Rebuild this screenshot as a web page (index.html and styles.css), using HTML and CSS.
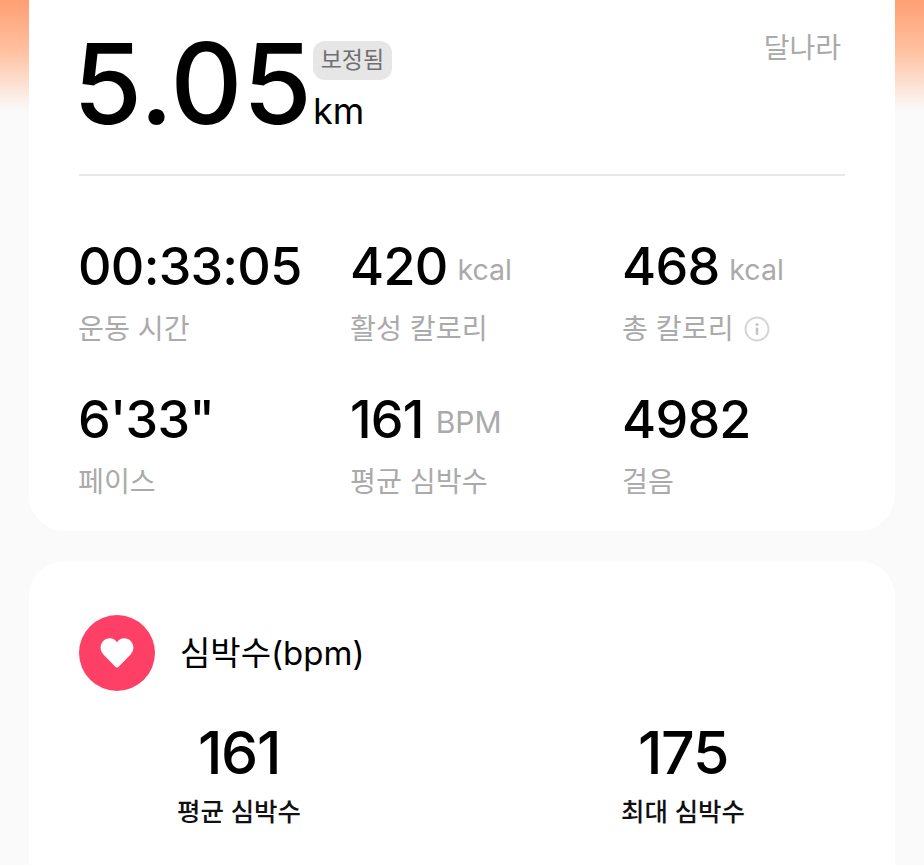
FILE: index.html
```html
<!DOCTYPE html>
<html lang="ko">

<head>
    <meta charset="UTF-8">
    <meta name="viewport" content="width=device-width, initial-scale=1.0">
    <title>운동 기록</title>
    <link rel="stylesheet" href="styles.css">
</head>

<body>
    <div class="page">
        <div class="card summary">
            <div class="top">
                <div class="distance">5.05</div>
                <div class="distanceSide">
                    <span class="tag">보정됨</span>
                    <span class="unit">km</span>
                </div>
                <div class="place">달나라</div>
            </div>
            <div class="line"></div>
            <div class="stats">
                <div class="stat">
                    <div class="value">00:33:05</div>
                    <div class="label">운동 시간</div>
                </div>
                <div class="stat">
                    <div class="value">420<span class="small">kcal</span></div>
                    <div class="label">활성 칼로리</div>
                </div>
                <div class="stat">
                    <div class="value">468<span class="small">kcal</span></div>
                    <div class="label">총 칼로리
                        <svg class="info" viewBox="0 0 26 26" width="26" height="26">
                            <circle cx="13" cy="13" r="11.5" fill="none" stroke="#d6d6d6" stroke-width="2" />
                            <circle cx="13" cy="8.500" r="1.6" fill="#c4c4c4" />
                            <rect x="11.7" y="11.5" width="2.6" height="7.5" rx="1" fill="#c4c4c4" />
                        </svg>
                    </div>
                </div>
                <div class="stat">
                    <div class="value">6'33"</div>
                    <div class="label">페이스</div>
                </div>
                <div class="stat">
                    <div class="value">161<span class="small bpm">BPM</span></div>
                    <div class="label">평균 심박수</div>
                </div>
                <div class="stat">
                    <div class="value">4982</div>
                    <div class="label">걸음</div>
                </div>
            </div>
        </div>

        <div class="card heart">
            <div class="heartHead">
                <div class="heartIcon">
                    <svg viewBox="0 0 34 32" width="34" height="32">
                        <path d="M17 30.5c-.7 0-1.3-.3-1.9-.9L3.4 17.4C1.6 15.500 .6 13.300 .6 10.800 .6 5.300 4.700 1.200 9.700 1.200c3 0 5.600 1.500 7.300 4 1.700-2.500 4.300-4 7.300-4 5 0 9.100 4.100 9.100 9.600 0 2.500-1 4.700-2.800 6.600L18.900 29.600c-.6.600-1.200.9-1.900.9z" fill="#fff" />
                    </svg>
                </div>
                <div class="heartTitle">심박수(bpm)</div>
            </div>
            <div class="heartStats">
                <div class="heartStat">
                    <div class="heartValue">161</div>
                    <div class="heartLabel">평균 심박수</div>
                </div>
                <div class="heartStat">
                    <div class="heartValue">175</div>
                    <div class="heartLabel">최대 심박수</div>
                </div>
            </div>
        </div>
    </div>
</body>

</html>
```

FILE: styles.css
```css
* {
    margin: 0;
    padding: 0;
    box-sizing: border-box;
}

html,
body {
    height: 865px;
    overflow: hidden;
}

body {
    font-family: Inter, "Noto Sans CJK KR", sans-serif;
    background: linear-gradient(#ff9f73 0, #ffc09f 50px, #fafafa 110px);
    color: #000;
}

.page {
    height: 865px;
    padding: 0 29px;
    display: flex;
    flex-direction: column;
    gap: 30px;
}

.card {
    background-color: #fff;
}

.summary {
    height: 531px;
    padding: 0 50px;
    border-radius: 0 0 36px 36px;
}

.top {
    display: flex;
    height: 174px;
}

.distance {
    font-size: 112px;
    line-height: 110px;
    font-weight: 500;
    margin-left: -6px;
    margin-top: 28px;
    height: 110px;
}

.distanceSide {
    display: flex;
    flex-direction: column;
    align-items: flex-start;
    margin-left: 1px;
    margin-top: 41px;
}

.tag {
    width: 79px;
    height: 39px;
    border-radius: 12px;
    background-color: #e6e6e6;
    color: #707070;
    font-size: 23px;
    line-height: 39px;
    text-align: center;
}

.unit {
    font-size: 36px;
    line-height: 40px;
    margin-top: 11px;
}

.place {
    margin-left: auto;
    margin-top: 30px;
    margin-right: 4px;
    color: #aaa;
    font-size: 28px;
    line-height: 36px;
}

.line {
    height: 2px;
    background-color: #e8e8e8;
}

.stats {
    display: grid;
    grid-template-columns: repeat(3, 272px);
    margin-top: 60px;
    row-gap: 29px;
}

.stat {
    height: 124px;
}

.value {
    height: 62px;
    margin-left: -1px;
    font-size: 52px;
    line-height: 62px;
    font-weight: 500;
    letter-spacing: -0.75px;
    white-space: nowrap;
}

.small {
    font-size: 28.5px;
    font-weight: 400;
    color: #aaa;
    letter-spacing: 0;
    margin-left: 10px;
    vertical-align: 5px;
}

.bpm {
    font-size: 30px;
    margin-left: 12px;
}

.label {
    margin-top: 11px;
    margin-left: -1px;
    display: flex;
    align-items: center;
    gap: 10px;
    font-size: 28.2px;
    line-height: 40px;
    color: #aaa;
}

.heart {
    flex: 1;
    padding: 54px 50px 0;
    border-radius: 36px 36px 0 0;
}

.heartHead {
    display: flex;
    align-items: center;
    gap: 25px;
}

.heartIcon {
    width: 76px;
    height: 76px;
    border-radius: 50%;
    background-color: #ff4066;
    display: flex;
    align-items: center;
    justify-content: center;
}

.heartTitle {
    font-size: 33px;
    line-height: 44px;
}

.heartStats {
    display: grid;
    grid-template-columns: 322px 322px;
    column-gap: 122px;
    margin-left: -1px;
    margin-top: 28px;
}

.heartStat {
    text-align: center;
}

.heartValue {
    font-size: 59px;
    line-height: 68px;
    font-weight: 500;
    letter-spacing: -1.3px;
}

.heartLabel {
    font-size: 25.5px;
    font-weight: 500;
    line-height: 36px;
    margin-top: 7px;
    color: #111;
}
```
